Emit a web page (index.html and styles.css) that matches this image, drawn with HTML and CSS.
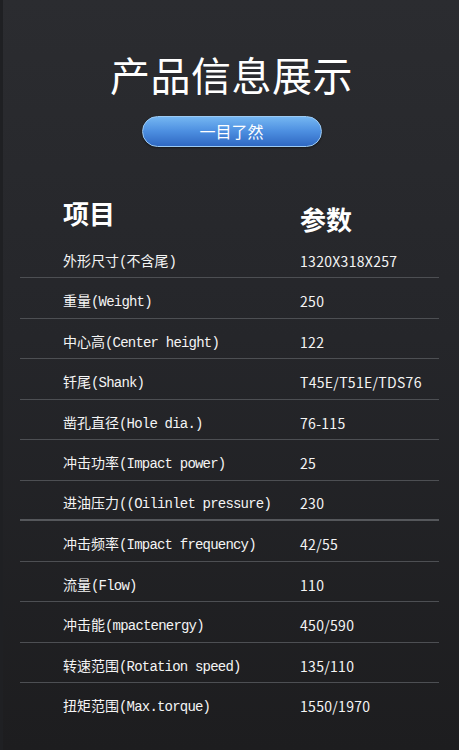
FILE: index.html
```html
<!DOCTYPE html>
<html lang="zh-CN">
<head>
<meta charset="utf-8">
<title>产品信息展示</title>
<link rel="stylesheet" href="styles.css">
</head>
<body>
<main class="page">
  <header class="hero">
    <h1 class="title">产品信息展示</h1>
    <button class="pill" type="button">一目了然</button>
  </header>
  <section class="spec">
    <div class="spec-head">
      <div class="col-label">项目</div>
      <div class="col-value head-value">参数</div>
    </div>
    <div class="row"><div class="col-label">外形尺寸<span class="en">(</span>不含尾<span class="en">)</span></div><div class="col-value">1320X318X257</div></div>
    <div class="row"><div class="col-label">重量<span class="en">(Weight)</span></div><div class="col-value">250</div></div>
    <div class="row"><div class="col-label">中心高<span class="en">(Center height)</span></div><div class="col-value">122</div></div>
    <div class="row"><div class="col-label">钎尾<span class="en">(Shank)</span></div><div class="col-value">T45E/T51E/TDS76</div></div>
    <div class="row"><div class="col-label">凿孔直径<span class="en">(Hole dia.)</span></div><div class="col-value">76-115</div></div>
    <div class="row"><div class="col-label">冲击功率<span class="en">(Impact power)</span></div><div class="col-value">25</div></div>
    <div class="row row-thick"><div class="col-label">进油压力<span class="en">((Oilinlet pressure)</span></div><div class="col-value">230</div></div>
    <div class="row"><div class="col-label">冲击频率<span class="en">(Impact frequency)</span></div><div class="col-value">42/55</div></div>
    <div class="row"><div class="col-label">流量<span class="en">(Flow)</span></div><div class="col-value">110</div></div>
    <div class="row"><div class="col-label">冲击能<span class="en">(mpactenergy)</span></div><div class="col-value">450/590</div></div>
    <div class="row"><div class="col-label">转速范围<span class="en">(Rotation speed)</span></div><div class="col-value">135/110</div></div>
    <div class="row row-last"><div class="col-label">扭矩范围<span class="en">(Max.torque)</span></div><div class="col-value">1550/1970</div></div>
  </section>
</main>
</body>
</html>
```

FILE: styles.css
```css
html, body {
  margin: 0;
  padding: 0;
}
body {
  width: 459px;
  min-height: 750px;
  background: linear-gradient(180deg, #2b2c30 0%, #25262a 45%, #1d1d1f 100%);
  font-family: "Noto Sans CJK SC", "Noto Sans", sans-serif;
  color: #fff;
  box-sizing: border-box;
  border-left: 3px solid #1f2023;
  overflow: hidden;
}
.page {
  display: flex;
  flex-direction: column;
}
.hero {
  display: flex;
  flex-direction: column;
  align-items: center;
  padding-top: 54px;
  margin-left: 1px;
}
.title {
  margin: 0;
  font-size: 40px;
  line-height: 40px;
  font-weight: 400;
  letter-spacing: 0.5px;
  color: #fff;
}
.pill {
  margin-top: 22px;
  width: 180px;
  height: 31px;
  border-radius: 16px;
  border: 1px solid #9ccaf3;
  background: linear-gradient(180deg, #74b6f2 0%, #4c8ee0 50%, #2f68c2 100%);
  color: #fff;
  font-family: "Noto Sans CJK SC", sans-serif;
  font-size: 16px;
  line-height: 29px;
  padding: 0;
  box-shadow: 0 1px 2px rgba(0,0,0,0.4);
}
.spec {
  margin-top: 53px;
  margin-left: 17px;
  width: 419px;
  display: flex;
  flex-direction: column;
}
.spec-head {
  display: flex;
  align-items: flex-start;
  font-size: 26px;
  line-height: 26px;
  font-weight: 700;
  height: 37.5px;
}
.head-value {
  padding-top: 6px;
}
.col-label {
  width: 280px;
  padding-left: 43px;
  box-sizing: border-box;
  flex: none;
  white-space: nowrap;
}
.col-value {
  flex: 1;
  white-space: nowrap;
}
.row {
  display: flex;
  align-items: center;
  padding-top: 7px;
  border-bottom: 1px solid #4d4f53;
  font-size: 14px;
  line-height: 16px;
  color: #f4f4f4;
  box-sizing: content-box;
  height: 32.5px;
}
.row .col-value {
  font-size: 14px;
  letter-spacing: 0.3px;
}
.row-thick {
  border-bottom: 2px solid #55575b;
  height: 31.5px;
}
.row-last {
  border-bottom: none;
}
.en {
  font-family: "Liberation Mono", "DejaVu Sans Mono", monospace;
  font-size: 14px;
  letter-spacing: -0.8px;
}
```
